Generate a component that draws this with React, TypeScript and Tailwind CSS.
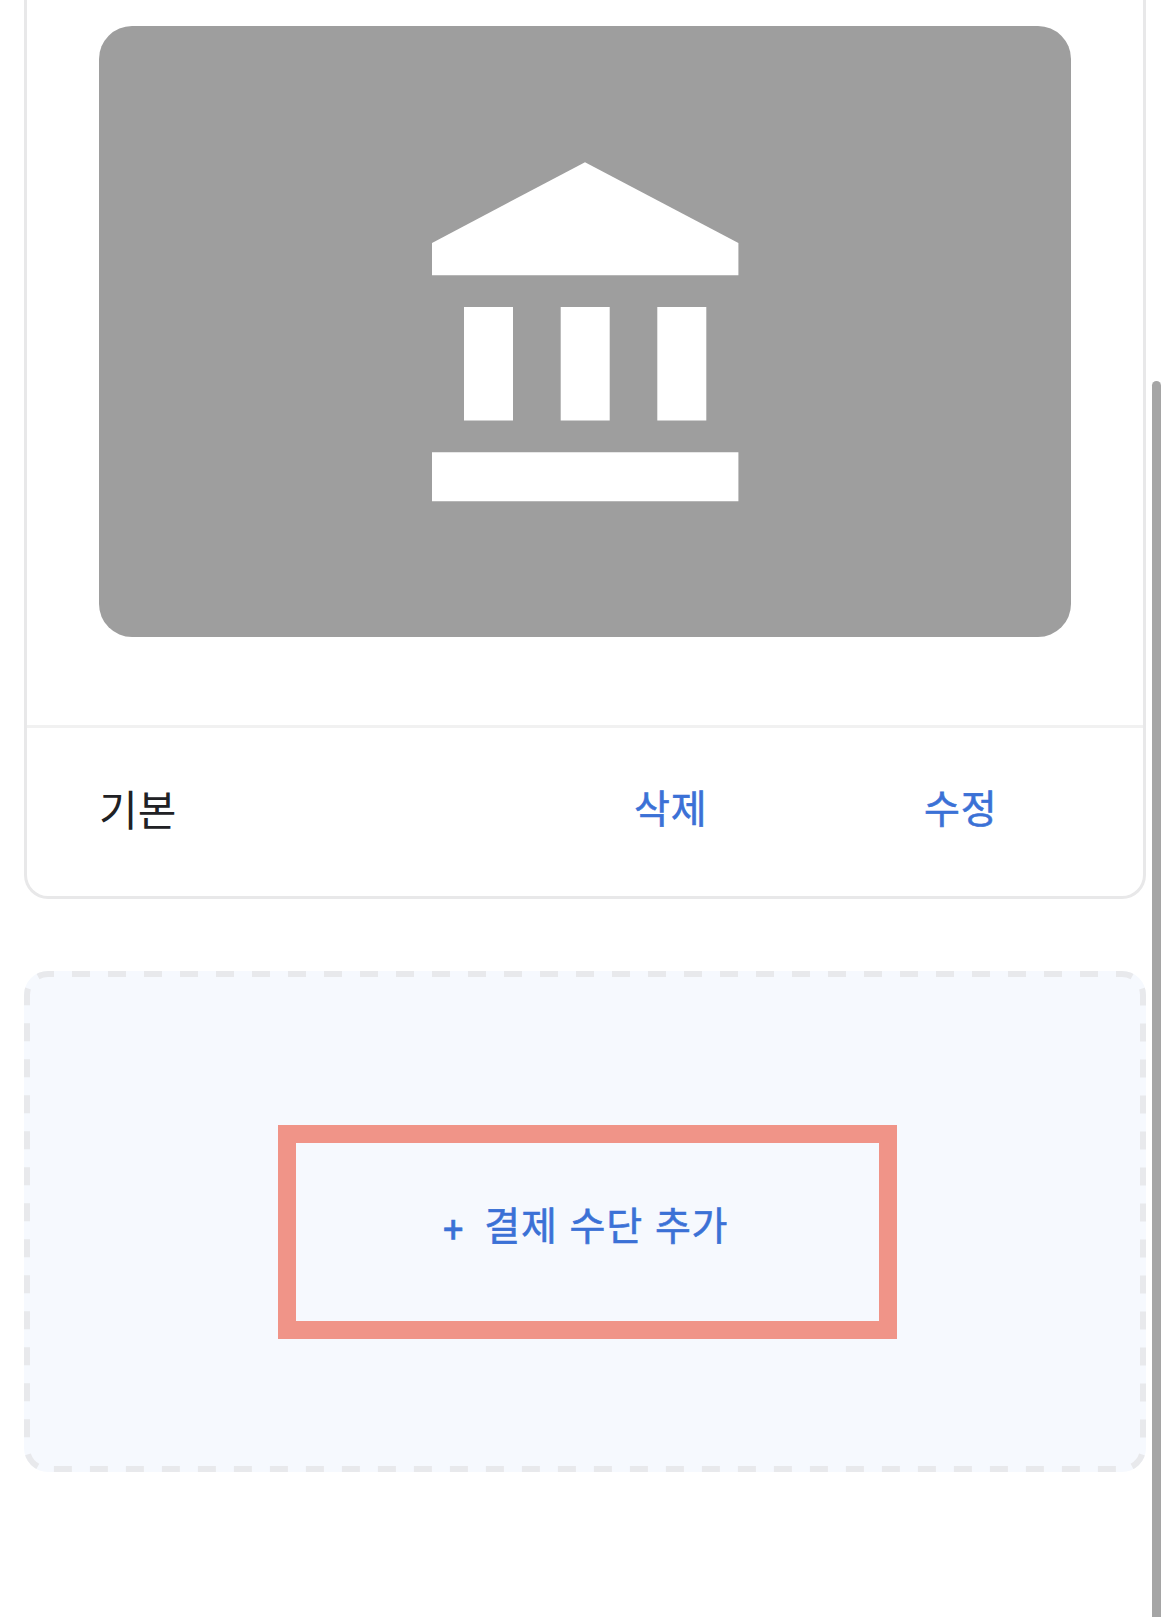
function BankIcon() {
  return (
    <svg width="308" height="341" viewBox="0 0 308 341" fill="#fff" aria-hidden="true">
      <path d="M154 1.200 307.400 82v32.300H1V82z" />
      <path d="M33 146h49v113.500H33zM129.700 146h49v113.500h-49zM226.300 146h49v113.500h-49z" />
      <path d="M1 291.300h306.400v49H1z" />
    </svg>
  );
}

const LINK = "text-[39px] leading-[60px] tracking-[0.8px] text-[#3b71d6] [-webkit-text-stroke:0.6px_#3b71d6]";

export default function App() {
  return (
    <div className="flex h-[1617px] w-[1169px] overflow-hidden bg-white font-['Roboto','Noto_Sans_CJK_KR',sans-serif]">
      <main className="ml-6 flex w-[1122px] flex-col">
        <section className="flex h-[899px] flex-col rounded-b-3xl border-3 border-t-0 border-[#e8e8e9]">
          <div className="h-[725px] px-[72px] pt-[26px]">
            <div className="flex h-[611px] justify-center rounded-[33px] bg-[#9e9e9e] pt-[135px]">
              <BankIcon />
            </div>
          </div>
          <div className="flex flex-1 items-start border-t-3 border-[#f1f1f1] pt-[52px] pl-[72px] text-[#202124]">
            <span className="w-[535px] text-[42px] leading-[64px]">기본</span>
            <button className={`${LINK} w-[290px] text-left`}>삭제</button>
            <button className={LINK}>수정</button>
          </div>
        </section>

        <section className="relative mt-[72px] flex h-[501px] justify-center overflow-hidden rounded-3xl bg-[#f6f9fe] pt-[154px]">
          {/* Dashed outline: the outer half of the stroke is clipped by the rounded panel */}
          <svg className="absolute inset-0" width="1122" height="501" aria-hidden="true">
            <rect
              width="1122"
              height="501"
              rx="24"
              fill="none"
              stroke="#e8e9ec"
              strokeWidth="12"
              strokeDasharray="18 18"
              strokeDashoffset="12"
            />
          </svg>
          <div className="ml-[5px] flex h-[214px] w-[619px] border-18 border-[#f09488] pt-[54px] pl-[147px]">
            <button className={`${LINK} flex h-[60px] items-start [word-spacing:1.5px]`}>
              <span className="mr-5 pt-[3px] text-[36px]">+</span>
              <span>결제 수단 추가</span>
            </button>
          </div>
        </section>
      </main>
      <div className="mt-[381px] ml-1.5 h-[1250px] w-[9px] rounded-full bg-[#a5a5a5]" />
    </div>
  );
}
